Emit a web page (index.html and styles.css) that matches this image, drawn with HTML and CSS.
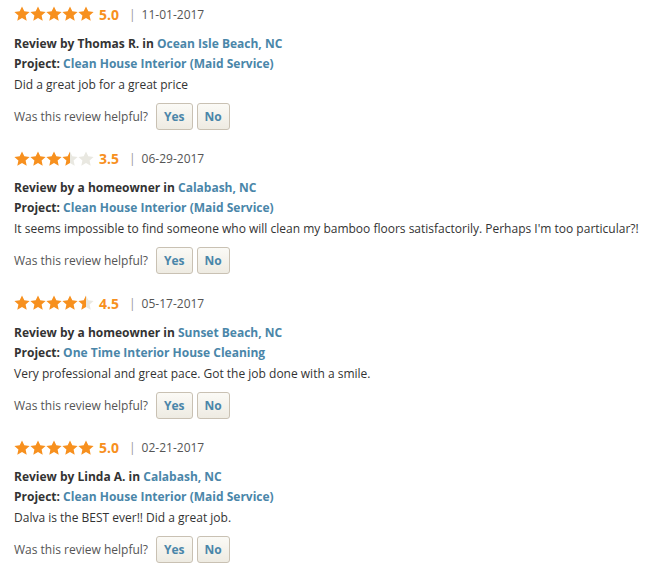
FILE: index.html
```html
<!DOCTYPE html>
<html>
<head>
<meta charset="utf-8">
<link rel="stylesheet" href="styles.css">
</head>
<body>
<svg width="0" height="0" class="defs">
  <defs>
    <symbol id="star" viewBox="0 0 16 16">
      <path d="M8 0.4 L10.3 5.3 L15.6 5.9 L11.6 9.5 L12.7 14.8 L8 12.1 L3.3 14.8 L4.4 9.5 L0.4 5.9 L5.7 5.3 Z"/>
    </symbol>
    <linearGradient id="half" x1="0" x2="1" y1="0" y2="0">
      <stop offset="0.5" stop-color="#f7901e"/>
      <stop offset="0.5" stop-color="#e9e8e1"/>
    </linearGradient>
  </defs>
</svg>

<div class="reviews">
  <div class="review">
    <div class="rating">
      <span class="stars">
        <svg class="star"><use href="#star"/></svg><svg class="star"><use href="#star"/></svg><svg class="star"><use href="#star"/></svg><svg class="star"><use href="#star"/></svg><svg class="star"><use href="#star"/></svg>
      </span>
      <span class="score">5.0</span>
      <span class="sep">|</span>
      <span class="date">11-01-2017</span>
    </div>
    <div class="line"><b>Review by Thomas R. in</b> <a class="link">Ocean Isle Beach, NC</a></div>
    <div class="line"><b>Project:</b> <a class="link">Clean House Interior (Maid Service)</a></div>
    <div class="text">Did a great job for a great price</div>
    <div class="helpful">
      <span class="q">Was this review helpful?</span>
      <button class="btn">Yes</button>
      <button class="btn">No</button>
    </div>
  </div>

  <div class="review">
    <div class="rating">
      <span class="stars">
        <svg class="star"><use href="#star"/></svg><svg class="star"><use href="#star"/></svg><svg class="star"><use href="#star"/></svg><svg class="star half"><use href="#star"/></svg><svg class="star empty"><use href="#star"/></svg>
      </span>
      <span class="score">3.5</span>
      <span class="sep">|</span>
      <span class="date">06-29-2017</span>
    </div>
    <div class="line"><b>Review by a homeowner in</b> <a class="link">Calabash, NC</a></div>
    <div class="line"><b>Project:</b> <a class="link">Clean House Interior (Maid Service)</a></div>
    <div class="text">It seems impossible to find someone who will clean my bamboo floors satisfactorily. Perhaps I'm too particular?!</div>
    <div class="helpful">
      <span class="q">Was this review helpful?</span>
      <button class="btn">Yes</button>
      <button class="btn">No</button>
    </div>
  </div>

  <div class="review">
    <div class="rating">
      <span class="stars">
        <svg class="star"><use href="#star"/></svg><svg class="star"><use href="#star"/></svg><svg class="star"><use href="#star"/></svg><svg class="star"><use href="#star"/></svg><svg class="star half"><use href="#star"/></svg>
      </span>
      <span class="score">4.5</span>
      <span class="sep">|</span>
      <span class="date">05-17-2017</span>
    </div>
    <div class="line"><b>Review by a homeowner in</b> <a class="link">Sunset Beach, NC</a></div>
    <div class="line"><b>Project:</b> <a class="link">One Time Interior House Cleaning</a></div>
    <div class="text">Very professional and great pace. Got the job done with a smile.</div>
    <div class="helpful">
      <span class="q">Was this review helpful?</span>
      <button class="btn">Yes</button>
      <button class="btn">No</button>
    </div>
  </div>

  <div class="review">
    <div class="rating">
      <span class="stars">
        <svg class="star"><use href="#star"/></svg><svg class="star"><use href="#star"/></svg><svg class="star"><use href="#star"/></svg><svg class="star"><use href="#star"/></svg><svg class="star"><use href="#star"/></svg>
      </span>
      <span class="score">5.0</span>
      <span class="sep">|</span>
      <span class="date">02-21-2017</span>
    </div>
    <div class="line"><b>Review by Linda A. in</b> <a class="link">Calabash, NC</a></div>
    <div class="line"><b>Project:</b> <a class="link">Clean House Interior (Maid Service)</a></div>
    <div class="text">Dalva is the BEST ever!! Did a great job.</div>
    <div class="helpful">
      <span class="q">Was this review helpful?</span>
      <button class="btn">Yes</button>
      <button class="btn">No</button>
    </div>
  </div>
</div>
</body>
</html>
```

FILE: styles.css
```css
html, body {
  margin: 0;
  padding: 0;
  background: #ffffff;
}
body {
  font-family: "Open Sans", "DejaVu Sans", sans-serif;
  font-size: 12px;
  color: #333333;
}
.defs {
  position: absolute;
  width: 0;
  height: 0;
}
.reviews {
  padding: 4px 0 0 14px;
}
.review {
  padding-bottom: 19px;
}
.rating {
  display: flex;
  align-items: center;
  height: 20px;
}
.stars {
  display: flex;
}
.star {
  width: 16px;
  height: 16px;
  fill: #f7901e;
}
.star.half {
  fill: url(#half);
}
.star.empty {
  fill: #e9e8e1;
}
.score {
  color: #f7901e;
  font-weight: 700;
  font-size: 14px;
  margin-left: 5px;
}
.sep {
  color: #999999;
  margin-left: 10px;
  font-size: 12px;
}
.date {
  color: #555555;
  margin-left: 6px;
  font-size: 12px;
}
.line {
  line-height: 20px;
}
.rating + .line {
  margin-top: 9.5px;
}
.line b {
  font-weight: 700;
  color: #333333;
}
.link {
  color: #4a86a9;
  font-weight: 700;
  text-decoration: none;
}
.text {
  line-height: 19px;
  margin-top: 1px;
}
.helpful {
  display: flex;
  align-items: center;
  margin-top: 9px;
  height: 27px;
}
.q {
  color: #555555;
  margin-right: 8px;
}
.btn {
  font-family: "Open Sans", "DejaVu Sans", sans-serif;
  font-size: 12px;
  font-weight: 700;
  color: #4a86a9;
  background: linear-gradient(#fbfaf6, #eeebe2);
  border: 1px solid #c9c1b3;
  border-radius: 3px;
  height: 27px;
  padding: 0 7px;
  margin-right: 4px;
  cursor: pointer;
}
```
